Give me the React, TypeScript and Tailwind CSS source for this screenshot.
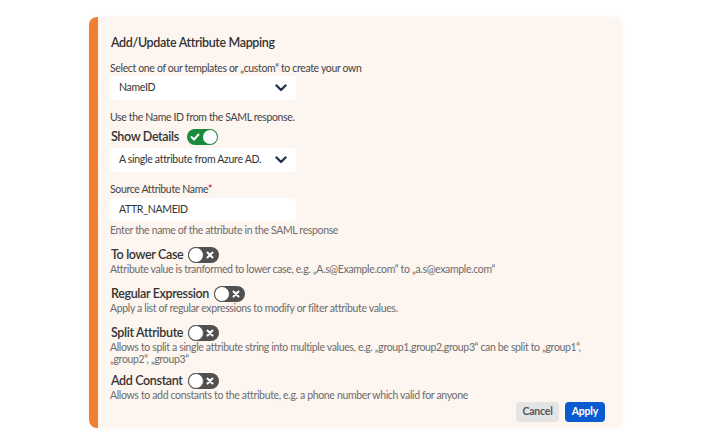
import React from "react";

const Chevron = () => (
  <svg width="12" height="8" viewBox="0 0 12 8" className="shrink-0">
    <polyline points="1.5,1.5 6,6 10.5,1.5" fill="none" stroke="#22324f" strokeWidth="2.4" strokeLinecap="round" strokeLinejoin="round" />
  </svg>
);

const Toggle = ({ on }: { on: boolean }) =>
  on ? (
    <div className="relative flex h-4 w-[31px] items-center rounded-full bg-[#1c8a3c] px-[3px]">
      <svg width="10" height="8" viewBox="0 0 10 8">
        <polyline points="1.5,4 4,6.5 8.5,1.5" fill="none" stroke="white" strokeWidth="2" strokeLinecap="round" strokeLinejoin="round" />
      </svg>
      <div className="absolute right-[1px] top-[1px] h-[14px] w-[14px] rounded-full bg-white" />
    </div>
  ) : (
    <div className="relative flex h-4 w-[31px] items-center justify-end rounded-full bg-[#505050] pr-[5px]">
      <svg width="8" height="8" viewBox="0 0 8 8">
        <path d="M1.5 1.5 L6.5 6.5 M6.5 1.5 L1.5 6.5" stroke="white" strokeWidth="2" strokeLinecap="round" />
      </svg>
      <div className="absolute left-0 top-0 h-4 w-4 rounded-full border border-[#505050] bg-white" />
    </div>
  );

const Select = ({ value }: { value: string }) => (
  <div className="flex h-6 w-[186px] items-center justify-between whitespace-nowrap rounded bg-white pl-[9px] pr-[9px] text-[10.5px] tracking-[-0.3px] text-[#333]">
    <span>{value}</span>
    <Chevron />
  </div>
);

const Option = ({ title, children, className }: { title: string; children: React.ReactNode; className?: string }) => (
  <div className={className}>
    <div className="flex h-4 items-center gap-[5px] pl-[1px]">
      <span className="text-[12.5px] font-semibold tracking-[-0.35px] text-[#333]">{title}</span>
      <Toggle on={false} />
    </div>
    <div className="text-[10.5px] leading-[12px] tracking-[-0.35px] text-[#6c6c6c]">{children}</div>
  </div>
);

export default function App() {
  return (
    <div className="h-[446px] w-[712px] bg-white pl-[89px] pt-[17px]" style={{ fontFamily: "Lato, 'Noto Sans', sans-serif" }}>
      <div className="h-[411px] w-[533px] rounded-lg border-l-[9px] border-[#f07f32] bg-[#fdf5f0] pl-[12px] pr-[17px] pt-[17px] shadow-[0_0_4px_rgba(0,0,0,0.04)]">
        <div className="pl-[1px] text-[12.5px] font-semibold leading-[18px] tracking-[-0.35px] text-[#333]">Add/Update Attribute Mapping</div>
        <div className="mt-[9px] text-[10.5px] leading-[14px] tracking-[-0.35px] text-[#444]">Select one of our templates or „custom“ to create your own</div>
        <div className="mt-[1px]">
          <Select value="NameID" />
        </div>
        <div className="mt-[10px] text-[10.5px] leading-[14px] tracking-[-0.35px] text-[#444]">Use the Name ID from the SAML response.</div>
        <div className="mt-[4px] flex h-[18px] items-center gap-[8px] pl-[1px]">
          <span className="text-[12.5px] font-semibold tracking-[-0.35px] text-[#333]">Show Details</span>
          <Toggle on />
        </div>
        <div className="mt-[2px]">
          <Select value="A single attribute from Azure AD." />
        </div>
        <div className="mt-[10px] text-[10.5px] leading-[14px] tracking-[-0.35px] text-[#444]">
          Source Attribute Name<span className="text-[#d0021b]">*</span>
        </div>
        <div className="mt-[2px] flex h-[23px] w-[186px] items-center rounded bg-white pl-[9px] text-[10.5px] tracking-[-0.3px] text-[#333]">ATTR_NAMEID</div>
        <div className="mt-[2px] text-[10.5px] leading-[14px] tracking-[-0.35px] text-[#6c6c6c]">Enter the name of the attribute in the SAML response</div>

        <Option title="To lower Case" className="mt-[10px]">
          Attribute value is tranformed to lower case, e.g. „A.s@Example.com“ to „a.s@example.com“
        </Option>
        <Option title="Regular Expression" className="mt-[11px]">
          Apply a list of regular expressions to modify or filter attribute values.
        </Option>
        <Option title="Split Attribute" className="mt-[11px]">
          Allows to split a single attribute string into multiple values, e.g. „group1,group2,group3“ can be split to „group1“,
          „group2“, „group3“
        </Option>
        <Option title="Add Constant" className="mt-[8px]">
          Allows to add constants to the attribute, e.g. a phone number which valid for anyone
        </Option>

        <div className="mt-[1px] flex justify-end gap-[6px]">
          <button className="h-5 rounded-sm bg-[#e4e4e4] px-[6px] text-[10.5px] font-bold tracking-[-0.2px] text-[#555]">Cancel</button>
          <button className="h-5 rounded-sm bg-[#0a5bd0] px-[7px] text-[10.5px] font-bold tracking-[-0.2px] text-white">Apply</button>
        </div>
      </div>
    </div>
  );
}
